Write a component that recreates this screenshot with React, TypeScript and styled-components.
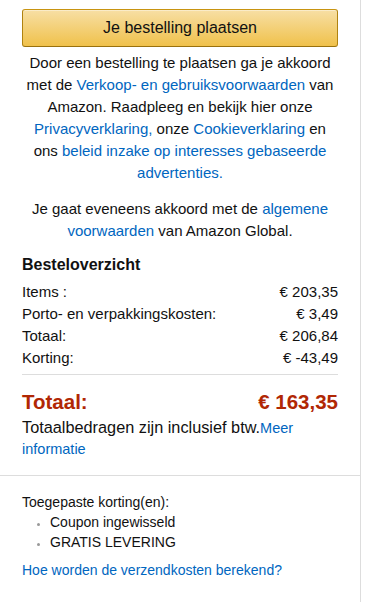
import React from "react";
import styled, { createGlobalStyle } from "styled-components";

const Global = createGlobalStyle`
  html, body { margin: 0; padding: 0; background: #fff; }
  body { font-family: "Liberation Sans", Arial, sans-serif; color: #111; }
`;

const Panel = styled.div`
  width: 361px;
  border-right: 1px solid #ddd;
  min-height: 602px;
  box-sizing: border-box;
`;

const Section = styled.div<{ $top: number; $bottom: number }>`
  padding: ${(p) => p.$top}px 22px ${(p) => p.$bottom}px 22px;
`;

const Divider = styled.hr`
  border: 0;
  border-top: 1px solid #ddd;
  margin: 0;
`;

const PlaceButton = styled.button`
  display: block;
  width: 100%;
  height: 38px;
  border: 1px solid;
  border-color: #c89411 #b0820f #99710d;
  border-radius: 3px;
  background: linear-gradient(to bottom, #f7dfa5, #f0c14b);
  box-shadow: inset 0 1px 0 rgba(255, 255, 255, 0.4);
  font-family: "Liberation Sans", Arial, sans-serif;
  font-size: 16px;
  color: #111;
  padding: 0;
  cursor: pointer;
`;

const Legal = styled.p<{ $mt: number }>`
  margin: ${(p) => p.$mt}px 0 0;
  font-size: 15px;
  line-height: 22px;
  text-align: center;
`;

const Link = styled.a<{ $size?: number }>`
  color: #0066c0;
  text-decoration: none;
  font-size: ${(p) => (p.$size ? `${p.$size}px` : "inherit")};
`;

const Heading = styled.h3`
  margin: 11px 0 0;
  font-size: 16px;
  font-weight: bold;
  line-height: 24px;
`;

const Row = styled.div`
  display: flex;
  justify-content: space-between;
  font-size: 15px;
  line-height: 22px;
`;

const Rows = styled.div`
  margin-top: 4px;
  padding-bottom: 5px;
  border-bottom: 1px solid #ddd;
`;

const GrandTotal = styled.div`
  display: flex;
  justify-content: space-between;
  margin-top: 14px;
  font-size: 20.5px;
  line-height: 26px;
  font-weight: bold;
  color: #b12704;
`;

const VatNote = styled.div`
  font-size: 16.3px;
  line-height: 20px;
  margin-top: 2px;
`;

const SmallText = styled.div`
  font-size: 14px;
  line-height: 20px;
`;

const Bullets = styled.ul`
  margin: 0;
  padding: 0 0 0 28px;
  font-size: 14px;
  line-height: 20px;
  li::marker { color: #999; font-size: 11px; }
`;

const FooterLink = styled.div`
  margin-top: 8px;
  font-size: 14px;
  line-height: 20px;
`;

export default function App() {
  return (
    <>
      <Global />
      <Panel>
        <Section $top={9} $bottom={16}>
          <PlaceButton>Je bestelling plaatsen</PlaceButton>
          <Legal $mt={5}>
            Door een bestelling te plaatsen ga je akkoord met de{" "}
            <Link href="#">Verkoop- en gebruiksvoorwaarden</Link> van Amazon. Raadpleeg en bekijk hier onze{" "}
            <Link href="#">Privacyverklaring,</Link> onze <Link href="#">Cookieverklaring</Link> en ons{" "}
            <Link href="#">beleid inzake op interesses gebaseerde advertenties.</Link>
          </Legal>
          <Legal $mt={14}>
            Je gaat eveneens akkoord met de <Link href="#">algemene voorwaarden</Link> van Amazon Global.
          </Legal>
          <Heading>Besteloverzicht</Heading>
          <Rows>
            <Row><span>Items :</span><span>€ 203,35</span></Row>
            <Row><span>Porto- en verpakkingskosten:</span><span>€ 3,49</span></Row>
            <Row><span>Totaal:</span><span>€ 206,84</span></Row>
            <Row><span>Korting:</span><span>€ -43,49</span></Row>
          </Rows>
          <GrandTotal><span>Totaal:</span><span>€ 163,35</span></GrandTotal>
          <VatNote>
            Totaalbedragen zijn inclusief btw.<Link href="#" $size={14.5}>Meer informatie</Link>
          </VatNote>
        </Section>
        <Divider />
        <Section $top={16} $bottom={16}>
          <SmallText>Toegepaste korting(en):</SmallText>
          <Bullets>
            <li>Coupon ingewisseld</li>
            <li>GRATIS LEVERING</li>
          </Bullets>
          <FooterLink><Link href="#">Hoe worden de verzendkosten berekend?</Link></FooterLink>
        </Section>
      </Panel>
    </>
  );
}
